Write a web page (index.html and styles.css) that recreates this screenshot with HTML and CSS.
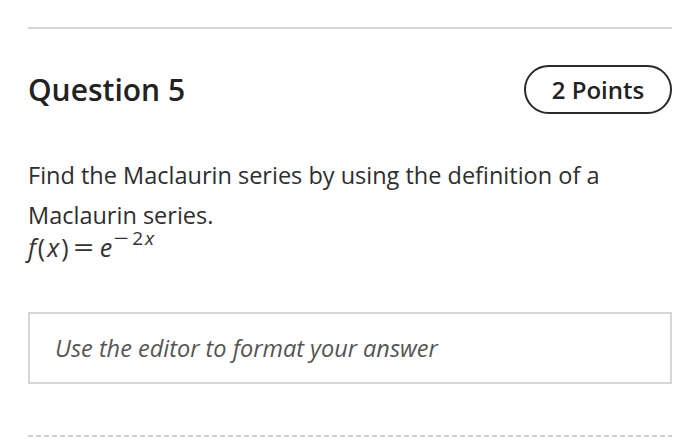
FILE: index.html
```html
<!DOCTYPE html>
<html lang="en">
<head>
<meta charset="utf-8">
<title>Question 5</title>
<link rel="stylesheet" href="styles.css">
</head>
<body>
<div class="page">
  <div class="rule"></div>
  <div class="header">
    <h2 class="title">Question 5</h2>
    <div class="points">2 Points</div>
  </div>
  <p class="prompt">Find the Maclaurin series by using the definition of a Maclaurin series.</p>
  <div class="math"><i>f</i>(<i>x</i>)<span class="eq">=</span><i>e</i><span class="sup"><span class="minus">−</span>2<i>x</i></span></div>
  <div class="answer">
    <span class="placeholder">Use the editor to format your answer</span>
  </div>
  <div class="dashed"></div>
</div>
</body>
</html>
```
FILE: styles.css
```css
html, body {
  margin: 0;
  padding: 0;
  background: #ffffff;
}
body {
  font-family: "Open Sans", "Noto Sans", sans-serif;
  color: #2b2b2b;
}
.page {
  padding: 27px 28px 0;
  display: flex;
  flex-direction: column;
}
.rule {
  height: 2px;
  background: #d6d6d6;
}
.header {
  margin-top: 36px;
  display: flex;
  justify-content: space-between;
  align-items: center;
}
.title {
  margin: 0;
  font-size: 30px;
  font-weight: 600;
  line-height: 40px;
  color: #222;
}
.points {
  box-sizing: border-box;
  height: 49px;
  width: 148px;
  border: 2px solid #2a2a2a;
  border-radius: 25px;
  display: flex;
  align-items: center;
  justify-content: center;
  font-size: 24px;
  font-weight: 600;
  color: #222;
}
.prompt {
  margin: 41px 0 0;
  font-size: 23.5px;
  line-height: 40px;
  color: #2e2e2e;
}
.math {
  height: 24px;
  font-size: 25px;
  line-height: 24px;
  letter-spacing: 2px;
  color: #333;
}
.math i {
  font-style: italic;
}
.eq {
  display: inline-block;
  margin: 0 7px 0 6px;
  transform: scaleX(1.45);
}
.sup {
  font-size: 19px;
  position: relative;
  top: -12px;
  margin-left: 0;
  letter-spacing: 2px;
}
.minus {
  display: inline-block;
  margin: 0 3px 0 2px;
  transform: scaleX(1.4);
}
.answer {
  margin-top: 53px;
  box-sizing: border-box;
  height: 72px;
  border: 2px solid #d6d6d6;
  display: flex;
  align-items: center;
  padding-left: 25px;
}
.placeholder {
  font-size: 23.5px;
  font-style: italic;
  color: #555;
}
.dashed {
  margin-top: 51px;
  height: 2px;
  background: repeating-linear-gradient(to right, #cfcfcf 0 5px, transparent 5px 8px);
}
```
